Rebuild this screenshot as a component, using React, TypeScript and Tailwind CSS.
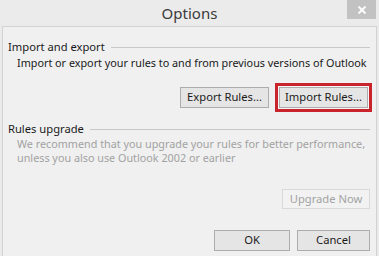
import React from "react";

const font = { fontFamily: '"Noto Sans", "Open Sans", sans-serif' };

function Btn({ children, className = "" }: { children: React.ReactNode; className?: string }) {
  return (
    <div
      className={
        "flex items-center justify-center h-[21px] border border-[#adadad] bg-[#e5e5e5] text-[11.2px] text-[#1a1a1a] " +
        className
      }
    >
      {children}
    </div>
  );
}

export default function App() {
  return (
    <div
      className="w-[379px] h-[256px] bg-[#ebebeb] flex flex-col overflow-hidden"
      style={font}
    >
      <div className="h-[26px] relative flex items-center justify-center shrink-0">
        <span className="text-[15px] text-[#3a3a3a] leading-none">Options</span>
        <div className="absolute right-[3px] top-0 w-[29px] h-[19px] bg-[#c2c2c2] flex items-center justify-center">
          <svg width="10" height="10" viewBox="0 0 10 10">
            <path d="M1.5 1.5 L8.5 8.5 M8.5 1.5 L1.5 8.5" stroke="#ffffff" strokeWidth="1.8" />
          </svg>
        </div>
      </div>
      <div className="flex-1 mx-[2px] border-x border-t border-[#d2d2d2] bg-[#f0f0f0] pl-[5px] pr-[6px] text-[10.8px] text-[#1a1a1a]">
        <div className="mt-[12px] flex items-center h-[16px] leading-[16px] text-[11.2px]">
          <span>Import and export</span>
          <div className="flex-1 h-px bg-[#c8c8c8] ml-[6px]" />
        </div>
        <div className="pl-[9px] h-[15px] leading-[15px] whitespace-nowrap">
          Import or export your rules to and from previous versions of Outlook
        </div>
        <div className="mt-[13px] flex justify-end items-center gap-[6px] mr-[-2px]">
          <Btn className="w-[89px]">Export Rules...</Btn>
          <div className="border-[3px] border-[#c9232b] p-px bg-[#f6f6f6]">
            <Btn className="w-[89px]">Import Rules...</Btn>
          </div>
        </div>
        <div className="mt-[9px] flex items-center h-[16px] leading-[16px] text-[11.2px]">
          <span>Rules upgrade</span>
          <div className="flex-1 h-px bg-[#c8c8c8] ml-[6px]" />
        </div>
        <div className="pl-[9px] text-[#a2a2a2] leading-[14px] whitespace-nowrap">
          <div>We recommend that you upgrade your rules for better performance,</div>
          <div>unless you also use Outlook 2002 or earlier</div>
        </div>
        <div className="mt-[24px] flex justify-end">
          <div className="w-[88px] h-[20px] flex items-center justify-center border border-[#d9d9d9] bg-[#f2f2f2] text-[#a3a3a3] text-[11.2px]">
            Upgrade Now
          </div>
        </div>
        <div className="mt-[21px] flex justify-end gap-[7px]">
          <Btn className="w-[76px]">OK</Btn>
          <Btn className="w-[73px]">Cancel</Btn>
        </div>
      </div>
    </div>
  );
}
